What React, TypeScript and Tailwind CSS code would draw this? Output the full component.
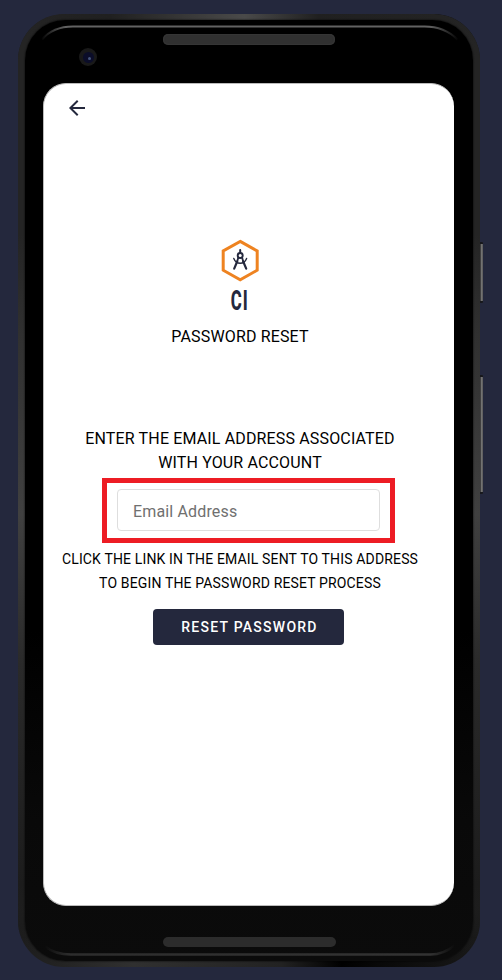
function BrandLogo() {
  return (
    <svg className="block h-[74px] w-10 shrink-0 overflow-visible" viewBox="220 239 40 74" aria-label="CI">
      <path d="M240.2 241.4 257.2 251v19.2L240.2 279.8l-17-9.6V251Z" fill="none" stroke="#ee8321" strokeWidth="3" />
      <g fill="none" stroke="#24283d" strokeLinecap="round">
        <path d="M240.2 250v3" strokeWidth="2" />
        <circle cx="240.2" cy="255.5" r="2.5" strokeWidth="1.9" />
        <path d="M238.3 257.5 237.2 261.5M242.1 257.5l1.1 4" strokeWidth="1.8" />
        <path d="M237.2 261.5l-3 7.2M243.2 261.5l3 7.2" strokeWidth="2.2" />
        <path d="M233.8 258.5c1.2 3 3.2 4.8 6.4 4.8s5.2-1.8 6.4-4.8" strokeWidth="1.4" />
      </g>
      <text
        transform="translate(230.8 309.7) scale(.61 1)"
        fontFamily="Roboto, sans-serif"
        fontWeight="800"
        fontSize="27.5"
        letterSpacing="1.6"
        fill="#24283d"
      >
        CI
      </text>
    </svg>
  );
}

function Shine() {
  return (
    <svg className="pointer-events-none absolute inset-0 h-full w-full" viewBox="17 14 463 953" aria-hidden="true">
      <defs>
        <linearGradient id="topShine" gradientUnits="userSpaceOnUse" x1="40" x2="458" y1="0" y2="0">
          <stop offset="0" stopColor="#777" stopOpacity="0" />
          <stop offset=".06" stopColor="#626262" />
          <stop offset=".93" stopColor="#626262" />
          <stop offset="1" stopColor="#777" stopOpacity="0" />
        </linearGradient>
        <linearGradient id="bottomShine" gradientUnits="userSpaceOnUse" x1="44" x2="454" y1="0" y2="0">
          <stop offset="0" stopColor="#333" stopOpacity="0" />
          <stop offset=".06" stopColor="#2d2d2d" />
          <stop offset=".94" stopColor="#333" />
          <stop offset="1" stopColor="#333" stopOpacity="0" />
        </linearGradient>
      </defs>
      <path d="M41 39Q52 26 72 26H424Q444 26 457 39" fill="none" stroke="url(#topShine)" strokeWidth="2" />
      <path d="M44 947Q54 955 70 955H430Q443 955 454 946" fill="none" stroke="url(#bottomShine)" strokeWidth="2.4" />
    </svg>
  );
}

function SideButton({ className }: { className: string }) {
  return (
    <div className={`absolute -right-[3px] w-[4px] rounded-r-[1px] border-y-2 border-[#17181c] bg-[linear-gradient(90deg,#202020_0%,#303030_30%,#777_65%,#555_100%)] ${className}`} />
  );
}

export default function App() {
  return (
    <div className="h-[980px] w-[502px] overflow-hidden bg-[#24283d] pt-[14px] pl-[17.5px] font-['Roboto',sans-serif] text-black">
      <div className="relative h-[953px] w-[462.5px] rounded-[46px] bg-[linear-gradient(90deg,#1c1c1c_0%,#303030_25%,#222_57%,#000_70%,#080808_78%,#191919_100%)]">
        <SideButton className="top-[228px] h-[61px]" />
        <SideButton className="top-[361px] h-[119px]" />
        <div className="absolute inset-0 rounded-[46px] bg-[linear-gradient(90deg,#242424_0%,#202020_20%,#4a4a4a_49%,#202020_65%,#242424_100%)] [mask-image:linear-gradient(#000_90%,transparent_97%)]" />
        <div className="absolute inset-0 rounded-[46px] bg-[linear-gradient(180deg,transparent_0,transparent_12px,#242424_55px,#242424_220px,#303030_320px,#404040_500px,#2a2a2a_650px,#1c1c1c_870px,transparent_940px)]" />
        <div className="relative h-full rounded-[46px] px-[7px] pt-[6px] pb-[6px]">
          <div className="flex h-full flex-col rounded-[40px] bg-[linear-gradient(180deg,#000_0%,#000_65%,#090909_85%,#0b0b0b_100%)] pt-[14px] pr-[19px] pl-[18.5px] shadow-[0_0_2px_#000]">
            <div className="ml-[120px] h-[11px] w-[172px] shrink-0 rounded-[5px] bg-[#303030] shadow-[inset_0_0_2px_#444]" />
            <div className="mt-[3px] ml-[36px] flex h-[18px] w-[18px] shrink-0 items-center justify-center rounded-full bg-[#191919]">
              <div className="flex h-[11px] w-[11px] items-center justify-center rounded-full bg-[#0b0d29]">
                <div className="mt-[2px] ml-[2px] h-[3px] w-[3px] rounded-full bg-[#46557d]" />
              </div>
            </div>
            <main className="mt-[17px] flex h-[823px] w-[411px] shrink-0 flex-col items-center rounded-[23px] border-y border-l border-[#bbb] bg-white pr-px">
              <header className="flex h-[48px] w-full shrink-0 items-center pl-[21px]">
                <button aria-label="Back" className="flex h-6 w-6 items-center justify-center">
                  <svg className="h-6 w-6" viewBox="0 0 24 24" fill="#24283d">
                    <path d="M20 11H7.83l5.59-5.59L12 4l-8 8 8 8 1.41-1.41L7.83 13H20v-2z" />
                  </svg>
                </button>
              </header>
              <div className="mt-[107px] flex w-full flex-col items-center pr-[17px]">
                <BrandLogo />
                <h1 className="mt-[12px] text-base leading-6 tracking-[0.15px]">PASSWORD RESET</h1>
                <p className="mt-[78px] text-center text-base leading-6 tracking-[0.15px]">
                  ENTER THE EMAIL ADDRESS ASSOCIATED
                  <br />
                  WITH YOUR ACCOUNT
                </p>
              </div>
              <div className="mt-[3px] h-[65px] w-[293px] shrink-0 border-5 border-[#ed1c24] px-[10px] pt-[6px]">
                <input
                  aria-label="Email Address"
                  placeholder="Email Address"
                  className="block h-[42px] w-[263px] rounded-[4px] border border-[#dedede] px-[15px] pt-[3px] text-base tracking-[0.15px] placeholder:text-[#707070]"
                />
              </div>
              <p className="mt-[4px] w-full pr-[17px] text-center text-sm leading-6 tracking-[0.15px] whitespace-nowrap">
                CLICK THE LINK IN THE EMAIL SENT TO THIS ADDRESS
                <br />
                TO BEGIN THE PASSWORD RESET PROCESS
              </p>
              <button className="mt-[14px] h-9 w-[191px] shrink-0 rounded-[4px] bg-[#24283d] pl-[2px] text-sm font-medium tracking-[1.25px] text-white">
                RESET PASSWORD
              </button>
            </main>
            <div className="mt-[31px] ml-[120px] h-[10px] w-[173px] shrink-0 rounded-[5px] bg-[#2c2c2c]" />
          </div>
        </div>
        <Shine />
      </div>
    </div>
  );
}
